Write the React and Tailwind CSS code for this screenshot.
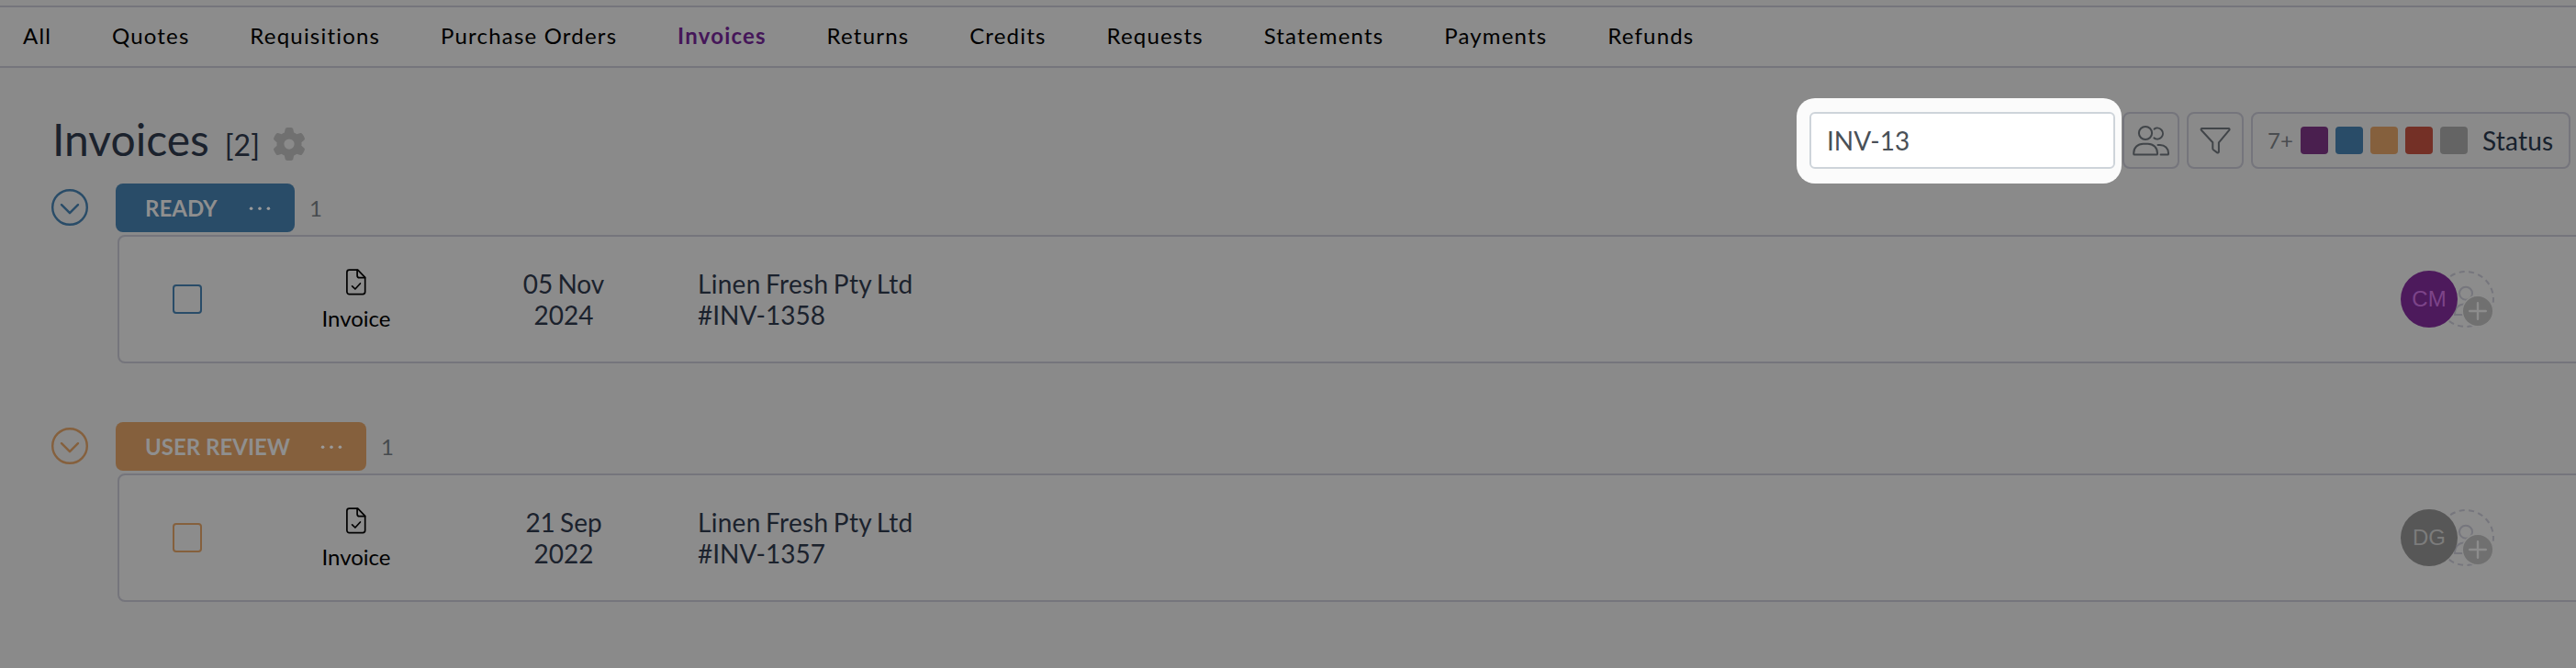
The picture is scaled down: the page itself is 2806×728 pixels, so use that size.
import React from "react";
import { FaGear } from "react-icons/fa6";

const tabs = [
  "All", "Quotes", "Requisitions", "Purchase Orders", "Invoices", "Returns",
  "Credits", "Requests", "Statements", "Payments", "Refunds",
];

const groups = [
  {
    status: "READY",
    badge: "w-[195px] bg-[#294c68]",
    tone: "text-[#294c68]",
    date: ["05 Nov", "2024"],
    number: "#INV-1358",
    initials: "CM",
    avatar: "bg-[#4d1a5c] text-[#7c4489]",
  },
  {
    status: "USER REVIEW",
    badge: "w-[273px] bg-[#85603d]",
    tone: "text-[#85603d]",
    date: ["21 Sep", "2022"],
    number: "#INV-1357",
    initials: "DG",
    avatar: "bg-[#575757] text-[#7c7c7c]",
  },
];

const swatches = ["bg-[#4a1f4f]", "bg-[#294c68]", "bg-[#85603d]", "bg-[#743026]", "bg-[#646464]"];

function UsersIcon() {
  return (
    <svg className="block h-[58px] w-[58px]" viewBox="0 0 58 58" fill="none" stroke="#414549" strokeWidth="2" strokeLinecap="round" strokeLinejoin="round">
      <circle cx="23" cy="21" r="7.1" />
      <path d="M32.6 16.6a6 6 0 1 1-.2 9.8" />
      <path d="M10.2 43.7v-.8c0-6 4.5-10.200 10.3-10.200h5.200c5.800 0 10.300 4.200 10.300 10.200v.8c0 .5-.4.900-.9.900H11.100c-.5 0-.9-.4-.9-.9Z" />
      <path d="M36.500 34h2.300c5.400 0 9.200 3.600 9.200 8.800v.900c0 .5-.4.900-.9.900H39.600" />
    </svg>
  );
}

function FunnelIcon() {
  return (
    <svg className="block h-[58px] w-[58px]" viewBox="0 0 58 58" fill="none" stroke="#414549" strokeWidth="2" strokeLinejoin="round">
      <path d="M14.500 16H43.600c.9 0 1.300 1 .8 1.700L32.900 31.300V41.500c0 .9-1 1.400-1.700.9L27 39.200c-.5-.4-.7-.8-.7-1.400V31.300L13.800 17.700c-.5-.7-.1-1.700.7-1.700Z" />
    </svg>
  );
}

function ChevronCircle() {
  return (
    <svg className="mb-px block h-10 w-10" viewBox="0 0 40 40" fill="none" stroke="currentColor" strokeWidth="2.400" strokeLinecap="round" strokeLinejoin="round">
      <circle cx="20" cy="20" r="18.800" />
      <path d="M11 17.200l9 9 9-9" />
    </svg>
  );
}

function FileCheckIcon() {
  return (
    <svg className="block h-[29px] w-[22px]" viewBox="0 0 22 29" fill="none" stroke="#000" strokeWidth="1.700" strokeLinecap="round" strokeLinejoin="round">
      <path d="M3.500 1.200h9.200L20.700 9.400V25.100a2.600 2.600 0 0 1-2.600 2.600H3.500a2.600 2.600 0 0 1-2.600-2.600V3.800a2.600 2.600 0 0 1 2.600-2.600Z" />
      <path d="M12.100 1.400V7.200a2.500 2.500 0 0 0 2.500 2.500h5.900" />
      <path d="M6.600 18.800l3.300 3.200 5.500-6" />
    </svg>
  );
}

function AssignIcon() {
  return (
    <svg className="absolute top-0 left-[40px] block h-[62px] w-[62px]" viewBox="0 0 62 62" fill="none" stroke="#76767d" strokeWidth="2" strokeLinecap="butt">
      <circle cx="31" cy="31" r="30" strokeDasharray="6 4.470" strokeDashoffset="2.300" />
      <circle cx="31" cy="24.700" r="7" />
      <path d="M19 48h24c0-7.500-4.500-11.600-10.500-11.600h-3C23.500 36.400 19 40.500 19 48Z" />
      <circle cx="44" cy="44" r="17.500" fill="#8c8c8c" stroke="none" />
      <circle cx="44" cy="44" r="16" fill="#707070" stroke="none" />
      <path d="M44 35.200v17.600M35.200 44h17.600" stroke="#8c8c8c" strokeWidth="2.400" strokeLinecap="round" />
    </svg>
  );
}

function Group({ group }) {
  return (
    <section className="w-[2840px]">
      <div className="flex h-[53px] items-center pl-14">
        <span className={group.tone}><ChevronCircle /></span>
        <div className={"ml-[30px] flex h-full items-center justify-between rounded-lg pr-[26px] pl-8 " + group.badge}>
          <span className="text-2xl font-bold whitespace-nowrap text-[#8f8f8f]">{group.status}</span>
          <svg className="block h-4 w-[24px]" viewBox="0 0 24 16" fill="#9a9a9a">
            <circle cx="2.600" cy="8.200" r="1.800" />
            <circle cx="12" cy="8.200" r="1.800" />
            <circle cx="21.400" cy="8.200" r="1.800" />
          </svg>
        </div>
        <span className="ml-4 text-2xl text-[#464a4e]">1</span>
      </div>
      <div className="mt-[3px] ml-32 flex h-[140px] items-center rounded-lg border-2 border-[#75757c] bg-[#8c8c8c] pl-[58px]">
        <div className={"h-8 w-8 rounded border-2 border-current " + group.tone} />
        <div className="ml-[108px] flex w-[120px] flex-col items-center gap-[10px] pt-px">
          <FileCheckIcon />
          <span className="text-2xl leading-[29px] text-black">Invoice</span>
        </div>
        <div className="ml-[106px] w-[120px] text-center text-[28px] leading-[34px] text-[#1b222d] [word-spacing:-2px]">
          {group.date.map((line) => <div key={line}>{line}</div>)}
        </div>
        <div className="ml-[86px] w-[1855px] text-[28px] leading-[34px] text-[#1b222d]">
          <div className="tracking-[0.3px] [word-spacing:-2px]">Linen Fresh Pty Ltd</div>
          <div>{group.number}</div>
        </div>
        <div className="relative h-[62px] w-[102px]">
          <AssignIcon />
          <div className={"relative flex h-[62px] w-[62px] items-center justify-center rounded-full font-['Liberation_Sans',sans-serif] text-2xl " + group.avatar}>
            {group.initials}
          </div>
        </div>
      </div>
    </section>
  );
}

export default function App() {
  return (
    <div className="h-[728px] w-[2806px] overflow-hidden bg-[#8a8a8a] pt-1.5 font-[Lato,sans-serif]">
      <nav className="flex h-[68px] items-center gap-[65.8px] border-y-2 border-[#75757c] bg-[#8c8c8c] pb-0.5 pl-[25px] text-2xl tracking-[1.2px] text-black">
        {tabs.map((tab) => (
          <a key={tab} className={tab === "Invoices" ? "font-bold whitespace-nowrap text-[#451659]" : "whitespace-nowrap"}>{tab}</a>
        ))}
      </nav>
      <header className="mt-12 flex h-[62px] items-center pl-14">
        <div className="flex w-[1915px] items-center text-[#1b222d]">
          <h1 className="flex items-baseline gap-[17px] pt-1 pl-px text-[48px] leading-[58px]">
            Invoices <span className="text-[32px]">[2]</span>
          </h1>
          <FaGear className="mt-2 ml-[14px] h-9 w-9 text-[#707070]" />
        </div>
        <div className="relative h-[62px] w-[333px]">
          <div className="absolute -top-[15px] -left-[14px] h-[93px] w-[354px] rounded-[20px] bg-[#fbfbfb]" />
          <div className="relative flex h-full items-center rounded-md border-2 border-[#ced4da] bg-white pl-[17px] text-[28px] text-[#495057]">INV-13</div>
        </div>
        <div className="ml-2 flex gap-2">
          <button className="h-[62px] w-[62px] rounded-lg border-2 border-[#75757c]"><UsersIcon /></button>
          <button className="h-[62px] w-[62px] rounded-lg border-2 border-[#75757c]"><FunnelIcon /></button>
          <div className="flex h-[62px] w-[348px] items-center rounded-lg border-2 border-[#75757c] pl-4">
            <span className="w-9 text-2xl text-[#4a4d50]">7+</span>
            <div className="flex gap-2">
              {swatches.map((color) => <span key={color} className={"h-[30px] w-[30px] rounded " + color} />)}
            </div>
            <span className="ml-4 text-[28px] tracking-[0.2px] text-[#17212d]">Status</span>
          </div>
        </div>
      </header>
      <main className="mt-4 flex flex-col gap-16">
        {groups.map((group) => <Group key={group.status} group={group} />)}
      </main>
    </div>
  );
}
